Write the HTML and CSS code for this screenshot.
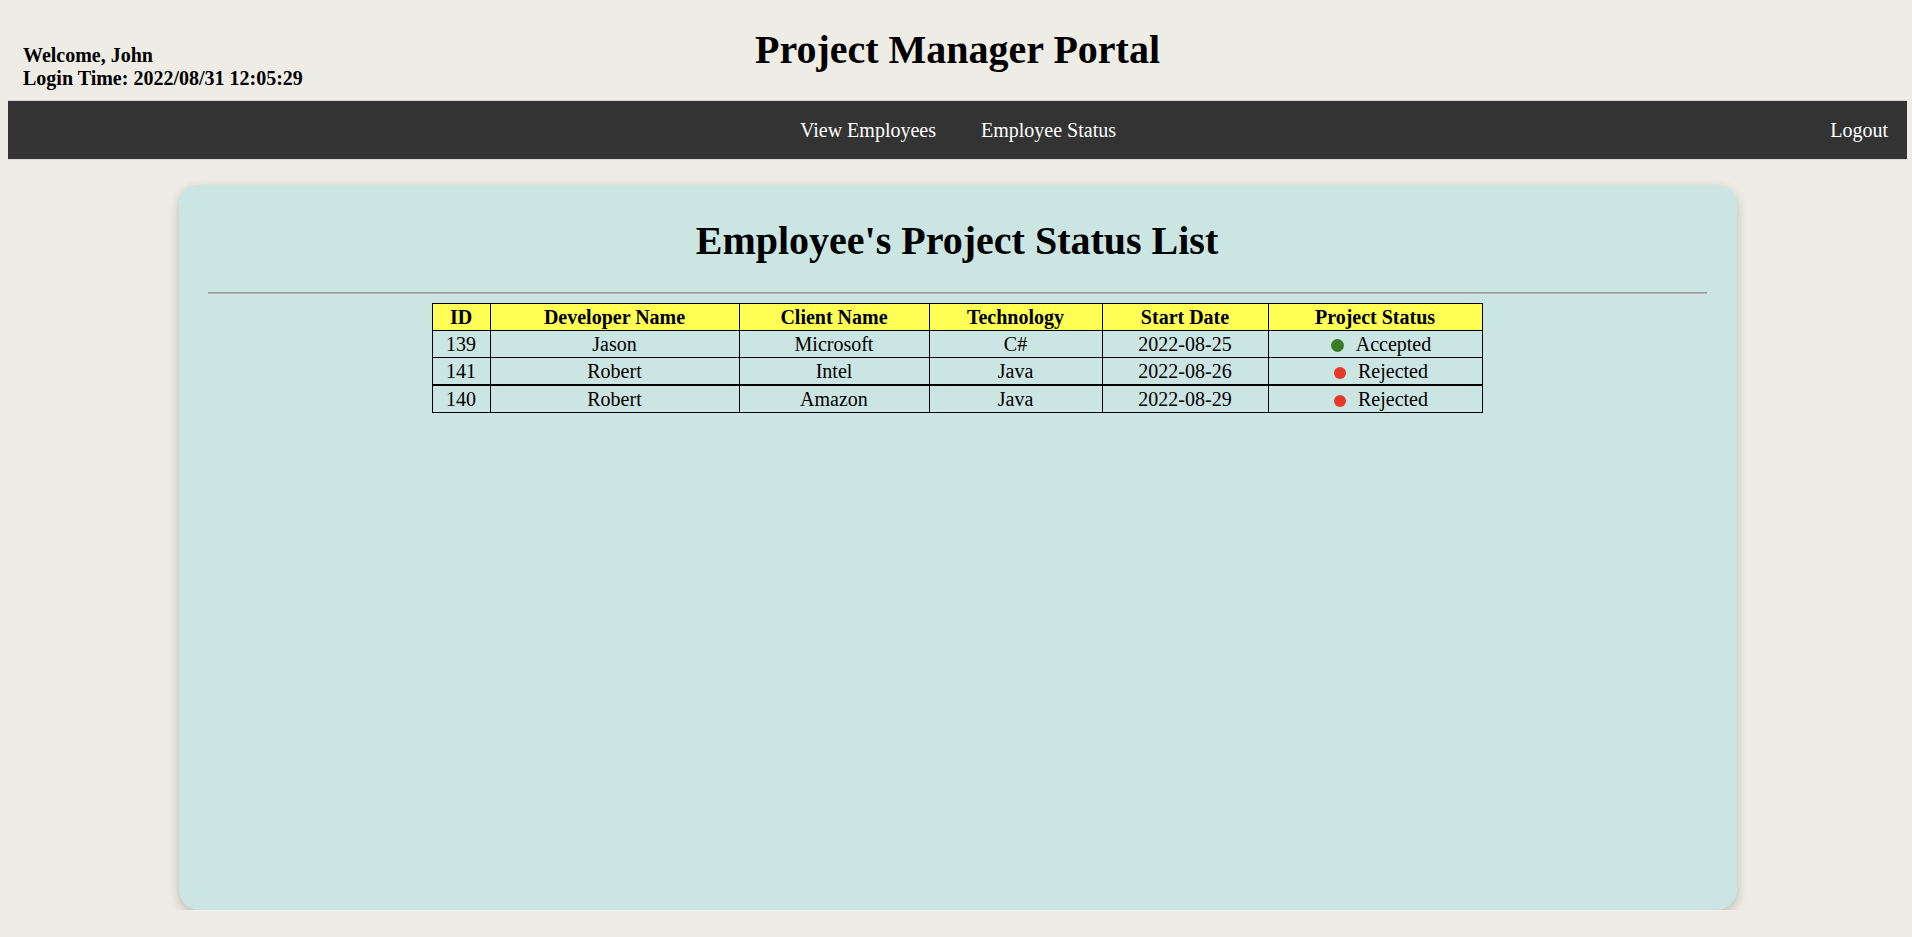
FILE: index.html
```html
<!DOCTYPE html>
<html lang="en">
<head>
<meta charset="utf-8">
<title>Project Manager Portal</title>
<link rel="stylesheet" href="styles.css">
</head>
<body>
<header class="header">
  <div class="user">
    <div>Welcome, John</div>
    <div>Login Time: 2022/08/31 12:05:29</div>
  </div>
  <h1 class="title">Project Manager Portal</h1>
  <div></div>
</header>
<nav class="nav">
  <div></div>
  <div class="links">
    <a href="#" class="link">View Employees</a>
    <a href="#" class="link">Employee Status</a>
  </div>
  <a href="#" class="link logout">Logout</a>
</nav>
<main class="card">
  <h2 class="card-title">Employee's Project Status List</h2>
  <hr class="rule">
  <table class="status-table">
    <colgroup>
      <col class="c-id"><col class="c-dev"><col class="c-client"><col class="c-tech"><col class="c-date"><col class="c-status">
    </colgroup>
    <thead>
      <tr><th>ID</th><th>Developer Name</th><th>Client Name</th><th>Technology</th><th>Start Date</th><th>Project Status</th></tr>
    </thead>
    <tbody>
      <tr><td>139</td><td>Jason</td><td>Microsoft</td><td>C#</td><td>2022-08-25</td><td class="status"><span class="dot dot-green"></span>Accepted</td></tr>
      <tr><td>141</td><td>Robert</td><td>Intel</td><td>Java</td><td>2022-08-26</td><td class="status"><span class="dot dot-red"></span>Rejected</td></tr>
      <tr class="row-split"><td>140</td><td>Robert</td><td>Amazon</td><td>Java</td><td>2022-08-29</td><td class="status"><span class="dot dot-red"></span>Rejected</td></tr>
    </tbody>
  </table>
</main>
</body>
</html>
```

FILE: styles.css
```css
html, body {
  background: #eeede5;
}
body {
  margin: 8px 5px 8px 8px;
  font-family: "Liberation Serif", "Times New Roman", serif;
  color: #000;
}
.header {
  display: grid;
  grid-template-columns: 1fr auto 1fr;
  height: 92px;
}
.user {
  align-self: end;
  padding: 0 0 10px 15px;
  font-size: 20px;
  font-weight: bold;
  line-height: 23px;
}
.title {
  margin: 19px 0 0;
  font-size: 40px;
  line-height: 46px;
  font-weight: bold;
}
.nav {
  display: grid;
  grid-template-columns: 1fr auto 1fr;
  align-items: center;
  height: 58px;
  background: #333333;
  border-top: 1px solid #cfcfcf;
  border-bottom: 1px solid #d8d8d8;
}
.links {
  display: flex;
  gap: 45px;
  padding-left: 1px;
}
.link {
  color: #ffffff;
  text-decoration: none;
  font-size: 20px;
  line-height: 23px;
}
.logout {
  justify-self: end;
  padding-right: 19px;
}
.card {
  box-sizing: border-box;
  width: 1558px;
  height: 725px;
  margin: 25px auto 0;
  padding: 33px 30px 0 29px;
  background: #cbe5e2;
  border-radius: 20px;
  box-shadow: 0 4px 12px rgba(0, 0, 0, 0.22);
}
.card-title {
  margin: 0;
  text-align: center;
  font-size: 40px;
  line-height: 46px;
  font-weight: bold;
}
.rule {
  margin: 28px 0 9px;
  height: 0;
  border: none;
  border-top: 1px solid #9b9b9b;
  border-bottom: 1px solid #b5b5b5;
}
.status-table {
  width: 1050px;
  margin: 0 auto;
  border-collapse: collapse;
  table-layout: fixed;
  font-size: 20px;
}
.c-id { width: 58px; }
.c-dev { width: 249px; }
.c-client { width: 190px; }
.c-tech { width: 173px; }
.c-date { width: 166px; }
.c-status { width: 214px; }
.status-table th,
.status-table td {
  border: 1px solid #000;
  height: 26px;
  padding: 0;
  text-align: center;
  line-height: 22px;
}
.status-table th {
  background: #ffff55;
  font-weight: bold;
}
.row-split td {
  border-top: 2px solid #000;
}
.status-table .status {
  padding-left: 12px;
}
.dot {
  display: inline-block;
  width: 12px;
  height: 12px;
  border-radius: 50%;
  margin-right: 12px;
  vertical-align: -1px;
}
.dot-green { background: #3a7d24; width: 13px; height: 13px; }
.dot-red { background: #e8382b; }
```
